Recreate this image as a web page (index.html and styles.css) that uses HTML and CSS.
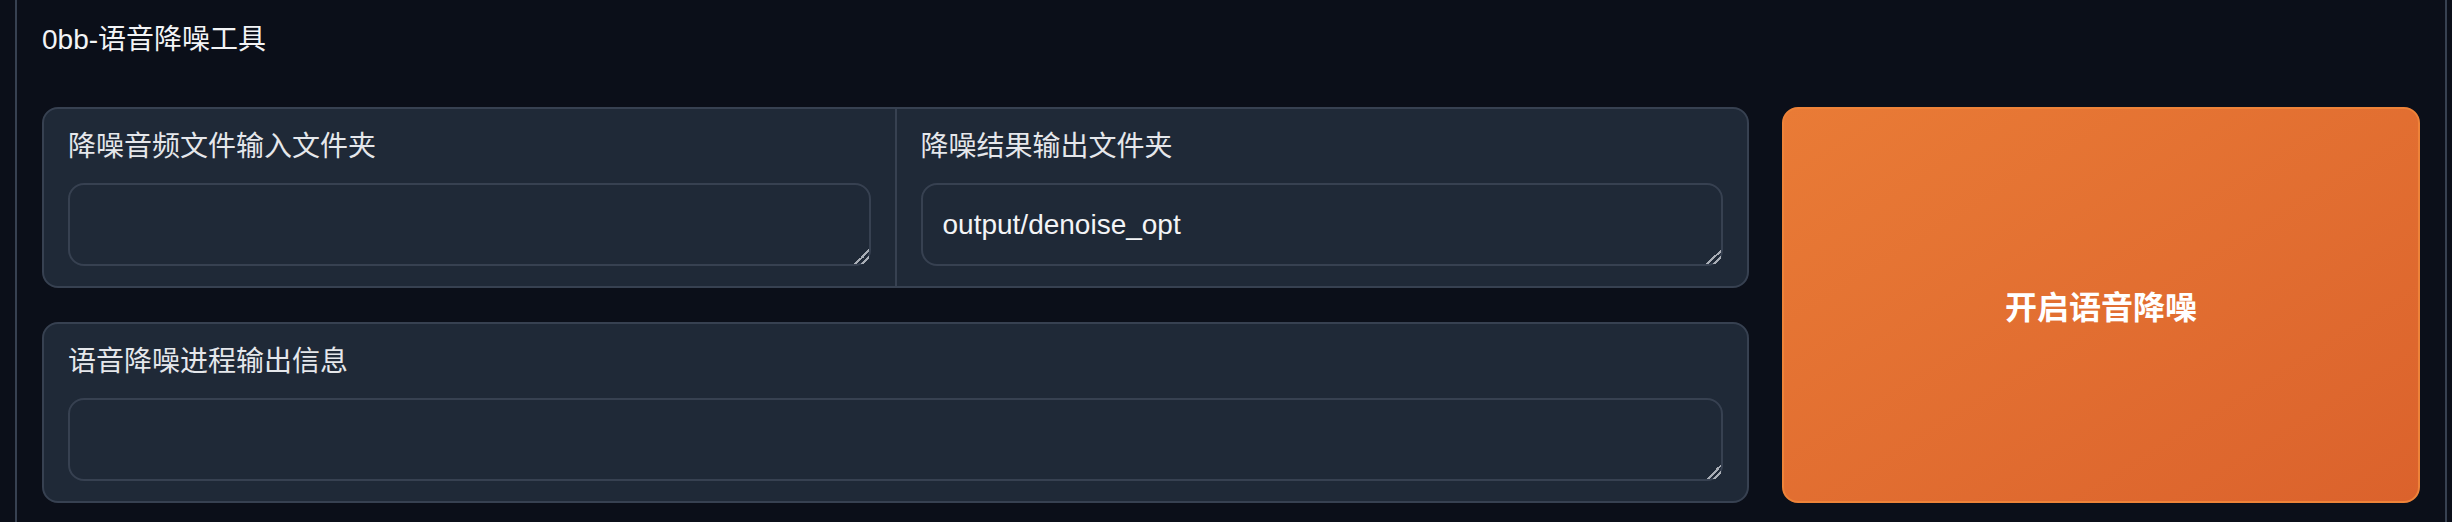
FILE: index.html
```html
<!DOCTYPE html>
<html lang="zh-CN">
<head>
    <meta charset="UTF-8">
    <meta name="viewport" content="width=device-width, initial-scale=1.0">
    <title>0bb-语音降噪工具</title>
    <link rel="stylesheet" href="styles.css">
</head>
<body>
    <div class="tool-panel">
        <h2 class="tool-title">0bb-语音降噪工具</h2>

        <div class="tool-row">
            <div class="tool-fields">
                <div class="field-card">
                    <div class="field">
                        <label for="inputDir">降噪音频文件输入文件夹</label>
                        <textarea id="inputDir" rows="1"></textarea>
                    </div>
                    <div class="field">
                        <label for="outputDir">降噪结果输出文件夹</label>
                        <textarea id="outputDir" rows="1">output/denoise_opt</textarea>
                    </div>
                </div>

                <div class="field-card">
                    <div class="field">
                        <label for="logInfo">语音降噪进程输出信息</label>
                        <textarea id="logInfo" rows="1"></textarea>
                    </div>
                </div>
            </div>

            <button type="button" class="start-btn">开启语音降噪</button>
        </div>
    </div>
</body>
</html>
```

FILE: styles.css
```css
* {
    margin: 0;
    padding: 0;
    box-sizing: border-box;
}

html {
    color-scheme: dark;
}

body {
    font-family: "Liberation Sans", "Noto Sans CJK SC", sans-serif;
    background-color: #0b0f19;
    color: #f3f4f6;
}

.tool-panel {
    margin: 0 5px 0 15px;
    min-height: 100vh;
    border-left: 2px solid #374151;
    border-right: 2px solid #374151;
    padding: 19px 25px 0;
}

.tool-title {
    font-size: 28px;
    font-weight: normal;
    line-height: 42px;
    color: #f3f4f6;
}

.tool-row {
    display: grid;
    grid-template-columns: 1fr 638px;
    gap: 33px;
    margin-top: 46px;
}

.tool-fields {
    display: flex;
    flex-direction: column;
    gap: 34px;
}

.field-card {
    display: flex;
    background-color: #1f2937;
    border: 2px solid #374151;
    border-radius: 16px;
    overflow: hidden;
}

.field {
    flex: 1;
    padding: 20px 24px;
}

.field + .field {
    border-left: 2px solid #374151;
}

.field label {
    display: block;
    font-size: 28px;
    line-height: 36px;
    color: #e5e7eb;
    margin-bottom: 18px;
}

.field textarea {
    display: block;
    width: 100%;
    height: 83px;
    padding: 20px;
    font-family: inherit;
    font-size: 28px;
    line-height: 39px;
    color: #f3f4f6;
    background-color: #1f2937;
    border: 2px solid #374151;
    border-radius: 16px;
    resize: vertical;
    outline: none;
}

/* poignée de redimensionnement : deux traits clairs */
.field textarea::-webkit-resizer {
    background: linear-gradient(135deg, transparent 50%, #a8adb5 50%, #a8adb5 60%, transparent 60%, transparent 72%, #a8adb5 72%, #a8adb5 82%, transparent 82%);
}

.start-btn {
    background: linear-gradient(to bottom right, #e97b36, #db622c);
    border: 2px solid #ee8339;
    border-radius: 16px;
    color: #ffffff;
    font-family: inherit;
    font-size: 32px;
    font-weight: bold;
    cursor: pointer;
}
```
